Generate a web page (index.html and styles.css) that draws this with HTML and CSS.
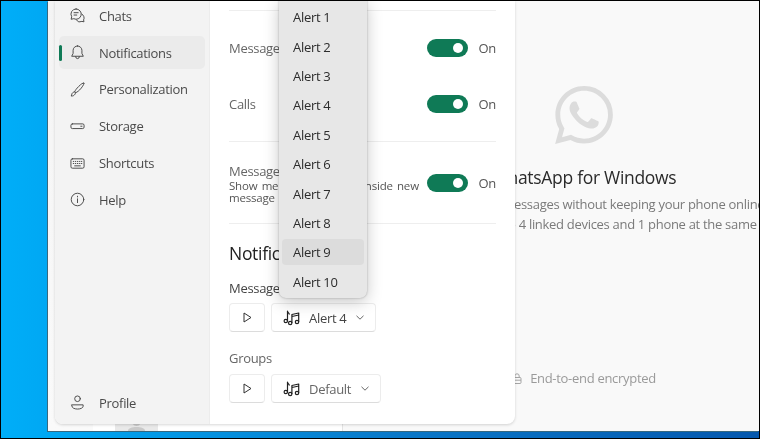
FILE: index.html
```html
<!DOCTYPE html>
<html lang="en">
<head>
<meta charset="utf-8">
<title>WhatsApp settings</title>
<link rel="stylesheet" href="styles.css">
</head>
<body>
<div class="desktop">
  <div class="window">
    <div class="chat-list">
      <div class="chat-avatar">
        <svg class="chat-avatar-icon" viewBox="0 0 43 7"><circle cx="21.5" cy="-2" r="4"/><path d="M13 7c0-3 4-4 8.500-4s8.500 1 8.500 4z"/></svg>
      </div>
    </div>
    <main class="welcome">
      <svg class="logo" viewBox="0 0 24 24"><path d="M17.472 14.382c-.297-.149-1.758-.867-2.03-.967-.273-.099-.471-.148-.67.15-.197.297-.767.966-.94 1.164-.173.199-.347.223-.644.075-.297-.15-1.255-.463-2.39-1.475-.883-.788-1.48-1.761-1.653-2.059-.173-.297-.018-.458.13-.606.134-.133.298-.347.446-.52.149-.174.198-.298.298-.497.099-.198.05-.371-.025-.52-.075-.149-.669-1.612-.916-2.207-.242-.579-.487-.5-.669-.51-.173-.008-.371-.01-.57-.01-.198 0-.52.074-.792.372-.272.297-1.04 1.016-1.04 2.479 0 1.462 1.065 2.875 1.213 3.074.149.198 2.096 3.2 5.077 4.487.709.306 1.262.489 1.694.625.712.227 1.36.195 1.871.118.571-.085 1.758-.719 2.006-1.413.248-.694.248-1.289.173-1.413-.074-.124-.272-.198-.57-.347m-5.421 7.403h-.004a9.87 9.87 0 01-5.031-1.378l-.361-.214-3.741.982.998-3.648-.235-.374a9.86 9.86 0 01-1.51-5.26c.001-5.45 4.436-9.884 9.888-9.884 2.64 0 5.122 1.03 6.988 2.898a9.825 9.825 0 012.893 6.994c-.003 5.45-4.437 9.884-9.885 9.884m8.413-18.297A11.815 11.815 0 0012.05 0C5.495 0 .16 5.335.157 11.892c0 2.096.547 4.142 1.588 5.945L.057 24l6.305-1.654a11.882 11.882 0 005.683 1.448h.005c6.554 0 11.89-5.335 11.893-11.893a11.821 11.821 0 00-3.48-8.413z"/></svg>
      <h1 class="welcome-title">WhatsApp for Windows</h1>
      <p class="welcome-text">Send and receive messages without keeping your phone online.<br>Use WhatsApp on up to 4 linked devices and 1 phone at the same time.</p>
      <p class="encrypted">
        <svg class="lock" viewBox="0 0 10 11"><rect x="1" y="4.500" width="8" height="6" rx="1"/><path d="M2.800 4.500V3a2.200 2.200 0 0 1 4.400 0v1.500"/><path d="M1 7.200h8"/></svg>
        End-to-end encrypted
      </p>
    </main>

    <section class="settings">
      <nav class="sidebar">
        <ul class="nav-list">
          <li class="nav-item">
            <svg class="nav-icon" viewBox="0 0 16 16"><path d="M6.500 1a5.500 5.500 0 0 0-4.700 8.300L1.200 12l2.800-.600A5.500 5.500 0 1 0 6.500 1z"/><path d="M4.300 5h4.400M4.300 7.500h2.900"/><path d="M12.800 6.600a4.500 4.500 0 0 1 1.700 6.100l.4 2-2.200-.4a4.500 4.500 0 0 1-5.800-1.300"/></svg>
            Chats
          </li>
          <li class="nav-item nav-item-active">
            <svg class="nav-icon" viewBox="0 0 16 16"><path d="M8 1a4.700 4.700 0 0 0-4.700 4.700V9L1.800 12h12.400l-1.500-3V5.700A4.700 4.700 0 0 0 8 1z"/><path d="M6 12.500a2 2 0 0 0 4 0"/></svg>
            Notifications
          </li>
          <li class="nav-item">
            <svg class="nav-icon" viewBox="0 0 16 16"><path d="M14.800 1.200c-1-.500-3 1-5.500 3.500S5.500 9 5 10.500l1 1c1.500-.700 3.700-2 6-5s3.300-4.800 2.800-5.300z"/><path d="M5 10.500c-1.800.200-2.700 1.200-3 2.400L1.300 15c1.800 0 3.800-.400 4.700-3.500"/></svg>
            Personalization
          </li>
          <li class="nav-item">
            <svg class="nav-icon" viewBox="0 0 16 16"><rect x="1" y="5.200" width="14" height="5" rx="1.500"/><path d="M11.500 7.700h1.300"/></svg>
            Storage
          </li>
          <li class="nav-item">
            <svg class="nav-icon" viewBox="0 0 16 16"><rect x="1" y="3" width="14" height="10" rx="1.500"/><path d="M3.500 5.800h.5M5.700 5.800h.5M7.900 5.800h.5M10.100 5.800h.5M12.200 5.800h.4M3.500 8h.5M5.700 8h.5M7.900 8h.5M10.100 8h.5M12.200 8h.4M5 10.500h6"/></svg>
            Shortcuts
          </li>
          <li class="nav-item">
            <svg class="nav-icon" viewBox="0 0 16 16"><circle cx="8" cy="8" r="6.700"/><path d="M8 7.300v4M8 4.500v.8"/></svg>
            Help
          </li>
        </ul>
        <div class="nav-item nav-profile">
          <svg class="nav-icon" viewBox="0 0 16 16"><circle cx="8" cy="4" r="3"/><path d="M2 10.500h12v1.500c0 1.700-2.700 3-6 3s-6-1.300-6-3z"/></svg>
          Profile
        </div>
      </nav>

      <div class="content">
        <hr class="rule">
        <div class="row row-first">
          <span class="row-label">Messages</span>
          <span class="switch-wrap"><span class="switch"></span>On</span>
        </div>
        <div class="row row-second">
          <span class="row-label">Calls</span>
          <span class="switch-wrap"><span class="switch"></span>On</span>
        </div>
        <hr class="rule rule-mid">
        <div class="row row-preview">
          <div class="row-text">
            <div class="row-label">Message previews</div>
            <div class="row-desc">Show message previews inside new message notifications</div>
          </div>
          <span class="switch-wrap"><span class="switch"></span>On</span>
        </div>
        <hr class="rule rule-low">
        <h2 class="section-title">Notifications</h2>
        <div class="sound-label sound-label-first">Messages</div>
        <div class="sound-controls sound-controls-first">
          <button class="btn btn-play"><svg class="play" viewBox="0 0 9 11"><path d="M1 1l7 4.500L1 10z"/></svg></button>
          <button class="btn btn-select">
            <svg class="music" viewBox="0 0 17 17"><circle cx="2.800" cy="12" r="1.700"/><circle cx="7.200" cy="14" r="1.700"/><circle cx="14" cy="13" r="1.700"/><path d="M4.500 12V2c0 1.500 1.500 2 2 3.500M8.900 14V5.500l6.800-1.500v9M9 7.500l6.700-1.500"/></svg>
            <span class="select-text">Alert 4</span>
            <svg class="chevron" viewBox="0 0 8 5"><path d="M.5.800L4 4.200 7.500.8"/></svg>
          </button>
        </div>
        <div class="sound-label sound-label-second">Groups</div>
        <div class="sound-controls sound-controls-second">
          <button class="btn btn-play"><svg class="play" viewBox="0 0 9 11"><path d="M1 1l7 4.500L1 10z"/></svg></button>
          <button class="btn btn-select">
            <svg class="music" viewBox="0 0 17 17"><circle cx="2.800" cy="12" r="1.700"/><circle cx="7.200" cy="14" r="1.700"/><circle cx="14" cy="13" r="1.700"/><path d="M4.500 12V2c0 1.500 1.500 2 2 3.500M8.900 14V5.500l6.800-1.500v9M9 7.500l6.700-1.500"/></svg>
            <span class="select-text select-text-muted">Default</span>
            <svg class="chevron" viewBox="0 0 8 5"><path d="M.5.800L4 4.200 7.500.8"/></svg>
          </button>
        </div>
      </div>
    </section>

    <ul class="menu">
      <li class="menu-item">Alert 1</li>
      <li class="menu-item">Alert 2</li>
      <li class="menu-item">Alert 3</li>
      <li class="menu-item">Alert 4</li>
      <li class="menu-item">Alert 5</li>
      <li class="menu-item">Alert 6</li>
      <li class="menu-item">Alert 7</li>
      <li class="menu-item">Alert 8</li>
      <li class="menu-item menu-item-hover">Alert 9</li>
      <li class="menu-item">Alert 10</li>
    </ul>
  </div>
</div>
</body>
</html>
```
FILE: styles.css
```css
* { box-sizing: border-box; }
html, body { margin: 0; padding: 0; height: 100%; overflow: hidden; background: #000; }
body { font-family: "Open Sans", "Noto Sans", sans-serif; font-size: 13px; letter-spacing: -0.3px; }

.desktop {
  width: 760px;
  height: 439px;
  border: 1px solid #000;
  padding: 0 0 7px 47px;
  display: flex;
  background: linear-gradient(90deg, #00aef8 0, #00a6f2 60px, #0a78c8 400px, #0558ae 758px);
  filter: blur(0.4px);
}

.window {
  position: relative;
  flex: 1;
  display: flex;
  overflow: hidden;
  background: #f9f9f9;
  box-shadow: -1px 1px 0 #37687f;
}

.chat-list {
  flex: 0 0 295px;
  display: flex;
  flex-direction: column;
  justify-content: flex-end;
  padding-left: 45px;
  background: linear-gradient(180deg, #f4f4f4, #fafafa);
  border-right: 1px solid #e4e4e4;
}
.chat-avatar {
  background: #fff;
  height: 7px;
  padding-left: 22px;
}
.chat-avatar-icon { display: block; width: 43px; height: 7px; background: #e9e9e9; fill: #c9c9c9; }

.welcome {
  flex: 0 0 482px;
  display: flex;
  flex-direction: column;
  align-items: center;
  padding-top: 85px;
  color: #6b6b6b;
}
.logo { width: 58px; height: 58px; fill: #dcdcdc; }
.welcome-title {
  margin: 20px 0 0;
  font-size: 17.500px;
  line-height: 26px;
  font-weight: 400;
  color: #2a2a2a;
  white-space: nowrap;
}
.welcome-text {
  margin: 4px 0 0;
  font-size: 13px;
  line-height: 20px;
  color: #7a7a7a;
  text-align: center;
  white-space: nowrap;
}
.encrypted {
  margin: 134px 0 0;
  display: flex;
  align-items: center;
  gap: 8px;
  line-height: 20px;
  color: #9a9a9a;
}
.lock { width: 10px; height: 11px; fill: none; stroke: #a5a5a5; stroke-width: 1; }

.settings {
  position: absolute;
  left: 7px;
  top: 0;
  bottom: 7px;
  width: 460px;
  display: flex;
  background: #fff;
  border-radius: 0 0 8px 8px;
  box-shadow: 0 1px 3px rgba(0, 0, 0, .16);
  overflow: hidden;
}

.sidebar {
  flex: 0 0 155px;
  display: flex;
  flex-direction: column;
  justify-content: space-between;
  padding: 0 4px 5px;
  background: #f3f3f3;
  border-right: 1px solid #ececec;
  color: #4a4a4a;
}
.nav-list {
  list-style: none;
  margin: -1.700px 0 0;
  padding: 0;
  display: flex;
  flex-direction: column;
  gap: 3.800px;
}
.nav-item {
  position: relative;
  height: 33px;
  display: flex;
  align-items: center;
  gap: 14px;
  padding-left: 11px;
  border-radius: 5px;
  white-space: nowrap;
}
.nav-item-active { background: #ebebeb; }
.nav-item-active::before {
  content: "";
  position: absolute;
  left: 0;
  top: 9px;
  width: 3px;
  height: 16px;
  border-radius: 2px;
  background: #0f7a56;
}
.nav-icon {
  flex: none;
  width: 15px;
  height: 15px;
  fill: none;
  stroke: #444;
  stroke-width: 1;
  stroke-linecap: round;
  stroke-linejoin: round;
}

.content {
  flex: 1;
  padding: 9px 19px 0;
  color: #666;
}
.rule { margin: 0; height: 1px; border: 0; background: #eeeeee; }
.rule-mid { margin-top: 28px; }
.rule-low { margin-top: 18px; }

.row { display: flex; justify-content: space-between; align-items: center; }
.row-first { margin-top: 28px; height: 18px; }
.row-second { margin-top: 38px; height: 18px; }
.row-preview { margin-top: 19px; height: 44px; }
.row-label { line-height: 18px; white-space: nowrap; }
.row-text { width: 195px; }
.row-desc { font-size: 11.500px; line-height: 12.500px; color: #555; letter-spacing: -0.2px; word-spacing: 1.500px; }

.switch-wrap { display: flex; align-items: center; gap: 11px; color: #555; }
.switch {
  position: relative;
  width: 41px;
  height: 18px;
  border-radius: 9px;
  background: #0f7a56;
}
.switch::after {
  content: "";
  position: absolute;
  right: 5px;
  top: 4px;
  width: 10px;
  height: 10px;
  border-radius: 50%;
  background: #fff;
}

.section-title {
  margin: 17px 0 0;
  font-size: 17.500px;
  line-height: 24px;
  font-weight: 400;
  color: #222;
  white-space: nowrap;
}
.sound-label { line-height: 18px; }
.sound-label-first { margin-top: 14px; color: #444; }
.sound-label-second { margin-top: 17px; }
.sound-controls { display: flex; gap: 6px; }
.sound-controls-first { margin-top: 6px; }
.sound-controls-second { margin-top: 7px; }

.btn {
  height: 29px;
  display: flex;
  align-items: center;
  padding: 0;
  background: #fff;
  border: 1px solid #ececec;
  border-bottom-color: #dcdcdc;
  border-radius: 4px;
  font: inherit;
  letter-spacing: inherit;
  color: #444;
}
.btn-play { width: 36px; justify-content: center; }
.btn-select { padding: 0 11px; gap: 9px; }
.play { width: 9px; height: 11px; fill: none; stroke: #333; stroke-width: 1; stroke-linejoin: round; }
.music { width: 17px; height: 17px; fill: none; stroke: #222; stroke-width: 1.200; stroke-linejoin: round; }
.select-text-muted { color: #666; }
.chevron { width: 8px; height: 5px; fill: none; stroke: #666; stroke-width: 1; margin-left: 1px; }

.menu {
  position: absolute;
  left: 231px;
  top: -0.700px;
  width: 88px;
  margin: 0;
  padding: 4px 3px 3px;
  list-style: none;
  display: flex;
  flex-direction: column;
  gap: 3.400px;
  background: #e7e7e7;
  border-radius: 0 0 7px 7px;
  box-shadow: 0 4px 16px rgba(0, 0, 0, .22), 0 0 2px rgba(0, 0, 0, .3);
  color: #2c2c2c;
}
.menu-item {
  height: 26px;
  display: flex;
  align-items: center;
  padding-left: 11px;
  border-radius: 4px;
  white-space: nowrap;
}
.menu-item-hover { background: #dcdcdc; }
```
